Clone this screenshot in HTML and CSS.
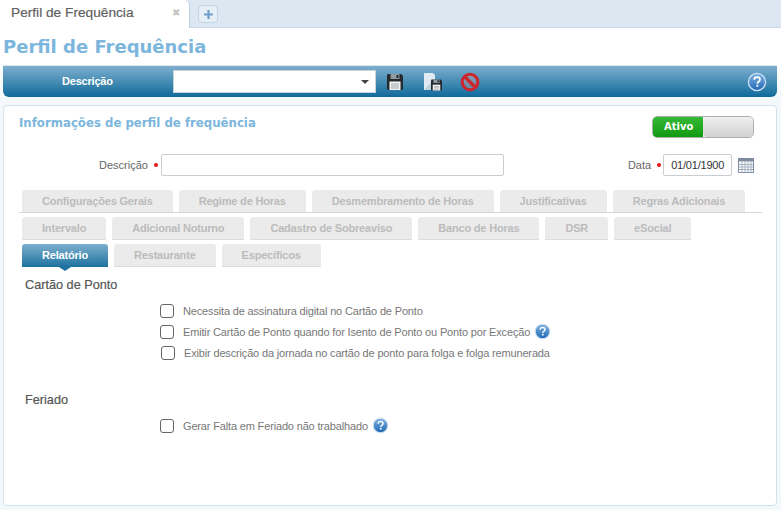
FILE: index.html
```html
<!DOCTYPE html>
<html lang="pt">
<head>
<meta charset="utf-8">
<title>Perfil de Frequência</title>
<link rel="stylesheet" href="styles.css">
</head>
<body>
<svg class="defs" width="0" height="0" aria-hidden="true">
  <defs>
    <linearGradient id="helpg" x1="0" y1="0" x2="0" y2="1"><stop offset="0" stop-color="#7fb2e2"/><stop offset="1" stop-color="#1f68b4"/></linearGradient>
    <symbol id="help" viewBox="0 0 20 20">
      <circle cx="10" cy="10" r="8.6" fill="url(#helpg)" stroke="#cfe2f3" stroke-width="1.3"/>
      <path d="M7.2 7.8c0-1.7 1.2-2.6 2.9-2.6 1.7 0 2.9 .9 2.9 2.4 0 1.2-.7 1.8-1.6 2.4-.7.5-1 .8-1 1.7" fill="none" stroke="#fff" stroke-width="1.7"/>
      <rect x="9.4" y="12.8" width="1.9" height="1.9" fill="#fff"/>
    </symbol>
    <symbol id="disk" viewBox="0 0 16 16">
      <path d="M0 1.5C0 .7.7 0 1.500 0H14l2 2v12.500c0 .8-.7 1.500-1.500 1.500h-13C.7 16 0 15.300 0 14.500z" fill="#23292d"/>
      <rect x="3.500" y="0" width="9" height="5" fill="#8f9aa1"/>
      <rect x="9.500" y="1" width="2" height="3" fill="#23292d"/>
      <rect x="2.500" y="7.500" width="11" height="8.500" fill="#f4f5f5"/>
      <path d="M4 10h8M4 12h8M4 14h8" stroke="#9aa2a8" stroke-width="1"/>
    </symbol>
  </defs>
</svg>

<header class="tabbar">
  <div class="doc-tab">
    <span class="doc-tab-label">Perfil de Frequência</span>
    <span class="doc-tab-close">✖</span>
  </div>
  <div class="add-tab">
    <svg width="11" height="11" viewBox="0 0 11 11"><path d="M5.500 1v9M1 5.500h9" stroke="#6d9fc9" stroke-width="2.200"/></svg>
  </div>
</header>

<h1 class="page-title">Perfil de Frequência</h1>

<main class="content">
  <div class="toolbar">
    <span class="toolbar-label">Descrição</span>
    <div class="select"><span class="select-arrow"></span></div>
    <svg class="tool-save" width="16" height="16"><use href="#disk"/></svg>
    <svg class="tool-saveas" width="20" height="18" viewBox="0 0 20 18">
      <path d="M1 0h9l2 2v15H1z" fill="#dfeaf2"/>
      <path d="M1 17 11 6v11z" fill="#bcd0dd"/>
      <use href="#disk" x="8" y="6" width="11" height="12"/>
    </svg>
    <svg class="tool-cancel" width="20" height="20" viewBox="0 0 20 20">
      <circle cx="10" cy="10" r="7.800" fill="#d9a0a0" fill-opacity=".35" stroke="#cc252c" stroke-width="3"/>
      <path d="M4.500 4.500 15.500 15.500" stroke="#cc252c" stroke-width="3.200"/>
    </svg>
    <svg class="tool-help" width="20" height="20"><use href="#help"/></svg>
  </div>

  <section class="panel">
    <div class="panel-head">
      <h2 class="panel-title">Informações de perfil de frequência</h2>
      <div class="toggle"><span class="toggle-on">Ativo</span><span class="toggle-off"></span></div>
    </div>

    <div class="form-row">
      <label class="field-label">Descrição</label><span class="req"></span>
      <div class="text-input"></div>
      <label class="date-label">Data</label><span class="req"></span>
      <div class="date-input">01/01/1900</div>
      <svg class="cal" width="16" height="15" viewBox="0 0 16 15">
        <rect x=".5" y=".5" width="15" height="14" fill="#fff" stroke="#7d8ca0"/>
        <rect x="1" y="1" width="14" height="2.500" fill="#7d8ca0"/>
        <path d="M1 6.500h14M1 9h14M1 11.500h14M4 3.500v11M7 3.500v11M10 3.500v11M13 3.500v11" stroke="#a3afbf" stroke-width="1"/>
      </svg>
    </div>

    <nav class="tabs">
      <div class="tab-row tab-row-first">
        <span class="tab">Configurações Gerais</span>
        <span class="tab">Regime de Horas</span>
        <span class="tab">Desmembramento de Horas</span>
        <span class="tab">Justificativas</span>
        <span class="tab">Regras Adicionais</span>
      </div>
      <div class="tab-row">
        <span class="tab">Intervalo</span>
        <span class="tab">Adicional Noturno</span>
        <span class="tab">Cadastro de Sobreaviso</span>
        <span class="tab">Banco de Horas</span>
        <span class="tab">DSR</span>
        <span class="tab">eSocial</span>
      </div>
      <div class="tab-row">
        <span class="tab tab-active">Relatório</span>
        <span class="tab">Restaurante</span>
        <span class="tab">Específicos</span>
      </div>
    </nav>

    <h3 class="group-title">Cartão de Ponto</h3>
    <div class="checks">
      <div class="check"><span class="box"></span><span>Necessita de assinatura digital no Cartão de Ponto</span></div>
      <div class="check"><span class="box"></span><span>Emitir Cartão de Ponto quando for Isento de Ponto ou Ponto por Exceção</span><svg class="q" width="17" height="17"><use href="#help"/></svg></div>
      <div class="check check-shift"><span class="box"></span><span>Exibir descrição da jornada no cartão de ponto para folga e folga remunerada</span></div>
    </div>

    <h3 class="group-title group-second">Feriado</h3>
    <div class="checks checks-second">
      <div class="check"><span class="box"></span><span>Gerar Falta em Feriado não trabalhado</span><svg class="q" width="17" height="17"><use href="#help"/></svg></div>
    </div>
  </section>
</main>
</body>
</html>
```

FILE: styles.css
```css
* { box-sizing: border-box; }
html, body { margin: 0; height: 510px; overflow: hidden; }
body { background: #fff; font-family: "Liberation Sans", Arial, sans-serif; color: #666; }
.defs { position: absolute; }

.tabbar { display: flex; align-items: flex-start; height: 28px; background: #dde7f1; border-bottom: 1px solid #c5d9ea; }
.doc-tab { display: flex; align-items: center; justify-content: space-between; width: 190px; height: 28px; padding: 0 9px 3px 11px; background: #fff; border-right: 1px solid #b6d0e6; border-top-right-radius: 5px; }
.doc-tab-label { font-size: 13.700px; color: #5f5f5f; -webkit-text-stroke: .2px #5f5f5f; }
.doc-tab-close { font-size: 10px; color: #c4c4c4; }
.add-tab { display: flex; align-items: center; justify-content: center; width: 20px; height: 18px; margin: 5px 0 0 8px; background: #e6eef6; border: 1px solid #c0d4e8; border-radius: 4px; }

.page-title { margin: 0; padding: 7px 0 0 3px; height: 37px; font: bold 18px/24px "DejaVu Sans", Verdana, sans-serif; color: #7db6dc; }

.content { height: 445px; padding: 0 4px 4px 3px; background: linear-gradient(#fff 0, #fff 1px, #f3f8fb 32px); }
.toolbar { display: flex; align-items: center; height: 32px; border-top: 1px solid #dfe7ec; border-radius: 0 0 6px 6px; background: linear-gradient(#7eafce, #0f6a9b); }
.toolbar-label { width: 170px; padding: 0 0 2px 59px; font-size: 11px; letter-spacing: -.2px; font-weight: bold; color: #fff; }
.select { position: relative; width: 203px; height: 23px; background: #fff; border: 1px solid #c9d2d8; }
.select-arrow { position: absolute; right: 6px; top: 9px; border: 4px solid transparent; border-top: 4px solid #444; border-bottom: 0; }
.tool-save { margin-left: 11px; }
.tool-saveas { margin-left: 20px; }
.tool-cancel { margin-left: 17px; }
.tool-help { margin-left: auto; margin-right: 10px; }

.panel { height: 401px; margin-top: 8px; background: #fff; border: 1px solid #d2e3ef; border-radius: 4px; padding: 0 15px; }
.panel-head { display: flex; justify-content: space-between; height: 40px; }
.panel-title { margin: 8px 0 0; font: bold 11.750px/19px "DejaVu Sans", Verdana, sans-serif; color: #7db6dc; }
.toggle { display: flex; width: 102px; height: 22px; margin: 10px 7px 0 0; border: 1px solid #a9b0ae; border-radius: 5px; overflow: hidden; }
.toggle-on { width: 50px; padding-left: 11px; font: bold 10px/20px "DejaVu Sans", Verdana, sans-serif; color: #fff; background: linear-gradient(#36b936, #109a10); }
.toggle-off { flex: 1; background: linear-gradient(#f0f0f0, #d2d2d2); border-radius: 4px; }

.form-row { display: flex; align-items: center; height: 22px; margin-top: 8px; font-size: 11px; }
.field-label { margin-left: 80px; }
.req { width: 4px; height: 4px; margin-left: 6px; border-radius: 50%; background: #e8141c; }
.text-input { width: 343px; height: 22px; margin-left: 3px; border: 1px solid #c9ced2; border-radius: 2px; }
.date-label { margin-left: 124px; }
.date-input { width: 69px; height: 22px; margin-left: 2px; border: 1px solid #c9ced2; border-radius: 2px; color: #333; text-align: center; line-height: 21px; letter-spacing: -.2px; }
.cal { margin-left: 6px; }

.tabs { margin-top: 14px; }
.tab-row { display: flex; gap: 6px; height: 23px; margin: 4px 0 0 3px; }
.tab-row-first { margin: 0; padding-left: 3px; width: 743px; height: 23px; border-bottom: 1px solid #d8d8d8; }
.tab { display: block; height: 23px; padding: 0 20px; background: #ebebeb; border-bottom: 1px solid #ddd; border-radius: 3px 3px 0 0; font-size: 11px; letter-spacing: -.185px; line-height: 22px; font-weight: bold; color: #bbb; white-space: nowrap; }
.tab-row-first .tab { height: 22px; border-bottom: 0; }
.tab-active { position: relative; color: #fff; background: linear-gradient(#7eafce, #1d72a0); border-bottom: 0; }
.tab-active::after { content: ""; position: absolute; left: 37px; top: 23px; border: 6px solid transparent; border-top: 4px solid #1d72a0; border-bottom: 0; }

.group-title { margin: 10px 0 0 6px; font-size: 12.700px; line-height: 16px; font-weight: normal; color: #555; -webkit-text-stroke: .2px #555; }
.group-second { margin-top: 29px; }
.checks { margin-top: 7px; padding-left: 141px; font-size: 11px; letter-spacing: -.16px; color: #777; }
.checks-second { margin-top: 7px; }
.check { display: flex; align-items: center; gap: 9px; height: 21px; white-space: nowrap; }
.check-shift { padding-left: 1px; }
.box { flex: none; width: 14px; height: 14px; background: #fff; border: 1px solid #666; border-radius: 3px; }
.q { margin-left: -5px; }
```
